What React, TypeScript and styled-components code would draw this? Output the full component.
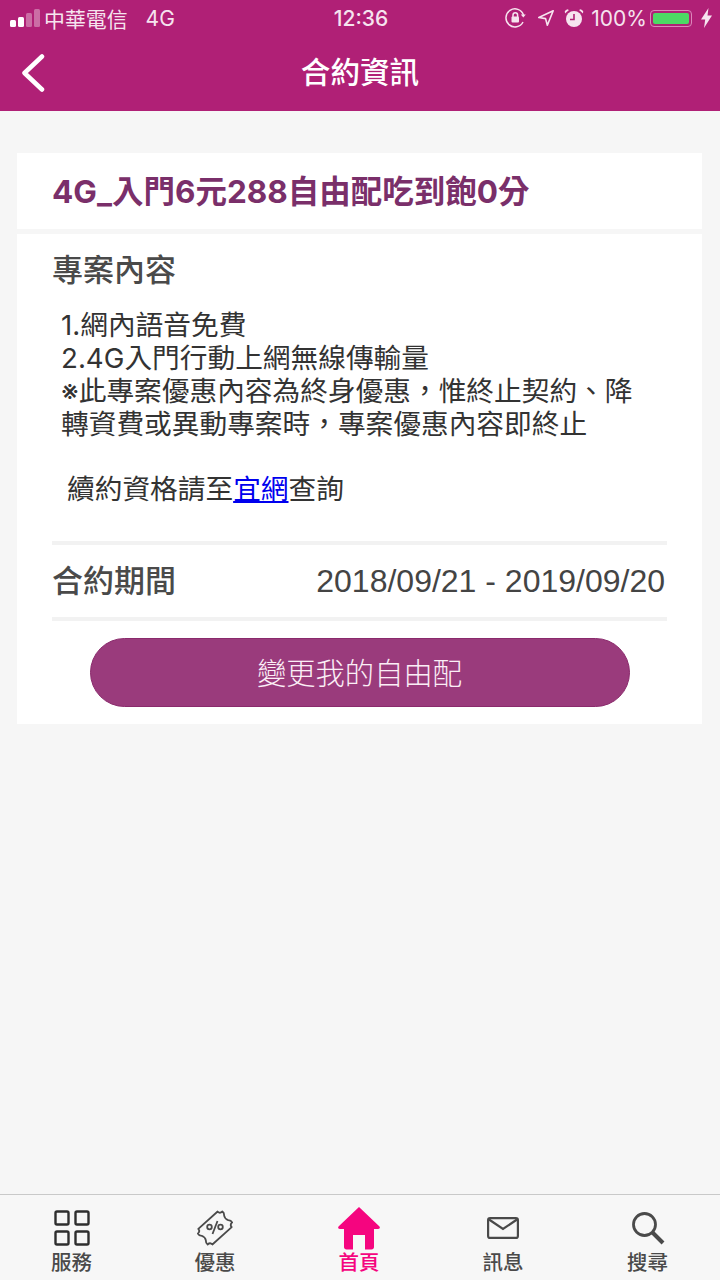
import React, { FunctionComponent } from 'react';
import styled, { createGlobalStyle } from 'styled-components';

const sans = '"Inter", "Noto Sans CJK TC", "Liberation Sans", sans-serif';

const GlobalStyle = createGlobalStyle`
  html, body {
    margin: 0;
    padding: 0;
    background: #f6f6f6;
  }
`;

const Page = styled.div`
  width: 720px;
  height: 1280px;
  display: flex;
  flex-direction: column;
  background: #f6f6f6;
  font-family: ${sans};
  overflow: hidden;
`;

const Header = styled.header`
  height: 111px;
  flex: none;
  background: #b02076;
  color: #fff;
  display: flex;
  flex-direction: column;
`;

const StatusBar = styled.div`
  height: 36px;
  padding: 0 8px 0 10px;
  display: grid;
  grid-template-columns: 1fr auto 1fr;
  align-items: center;
  font-size: 21px;
  color: #f6e4ef;
`;

const StatusLeft = styled.div`
  display: flex;
  align-items: center;
  gap: 4px;
`;

const StatusRight = styled.div`
  display: flex;
  align-items: center;
  justify-content: flex-end;
`;

const StatusGap = styled.span<{ $w: number }>`
  width: ${({ $w }) => $w}px;
`;

const Carrier = styled.span`
  font-size: 20.9px;
  margin-right: 14px;
`;

const Clock = styled.span`
  font-size: 21px;
  font-weight: 500;
`;

const Signal = styled.div`
  display: flex;
  align-items: flex-end;
  gap: 2px;
  height: 18px;
`;

const SignalBar = styled.i<{ $h: number; $on: boolean }>`
  display: block;
  width: 6px;
  height: ${({ $h }) => $h}px;
  border-radius: 1.5px;
  background: ${({ $on }) => ($on ? '#fff' : 'rgba(255,255,255,0.35)')};
`;

const Battery = styled.div`
  width: 42px;
  height: 17px;
  margin: 0 2px 0 3px;
  padding: 2px;
  box-sizing: border-box;
  border: 1px solid #dd86bb;
  border-radius: 4px;
  display: flex;
`;

const BatteryFill = styled.div`
  flex: 1;
  background: #4cd964;
  border-radius: 2px;
`;

const NavRow = styled.div`
  flex: 1;
  position: relative;
  display: flex;
  align-items: center;
  justify-content: center;
  padding-bottom: 6px;
`;

const NavTitle = styled.h1`
  margin: 0;
  font-size: 29.6px;
  font-weight: 500;
  color: #fff;
`;

const BackButton = styled.div`
  position: absolute;
  left: 21px;
  top: 18px;
  width: 24px;
  height: 38px;
`;

const Content = styled.main`
  flex: 1;
  padding: 42px 18px 0 17px;
  display: flex;
  flex-direction: column;
  gap: 5px;
`;

const TitleCard = styled.section`
  height: 76px;
  background: #fff;
  padding: 0 35px 4px;
  box-sizing: border-box;
  display: flex;
  align-items: center;
`;

const PlanTitle = styled.h2`
  margin: 0;
  font-size: 31.5px;
  font-weight: 700;
  color: #7a2f6a;
  white-space: nowrap;
`;

const DetailCard = styled.section`
  height: 490px;
  box-sizing: border-box;
  background: #fff;
  padding: 17px 35px 0 35px;
  display: flex;
  flex-direction: column;
`;

const SectionTitle = styled.h3`
  margin: 0;
  font-size: 31px;
  line-height: 38px;
  font-weight: 500;
  color: #4a4a4a;
`;

const Body = styled.div`
  margin-top: 20px;
  height: 232px;
  padding-left: 9px;
  font-size: 27.7px;
  line-height: 33px;
  color: #333;
`;

const BodyLine = styled.div`
  white-space: nowrap;
`;

const RenewLine = styled.div`
  margin-top: 32px;
  padding-left: 6px;
  white-space: nowrap;
`;

const Link = styled.a`
  color: #0000ee;
  text-decoration: underline;
`;

const Rule = styled.div`
  height: 4px;
  flex: none;
  background: #f2f2f2;
`;

const PeriodRow = styled.div`
  height: 72px;
  box-sizing: border-box;
  display: flex;
  align-items: center;
  justify-content: space-between;
  padding: 0 2px 5px 0;
`;

const PeriodLabel = styled.span`
  font-size: 31px;
  font-weight: 500;
  color: #4a4a4a;
`;

const PeriodValue = styled.span`
  margin-top: 5px;
  font-size: 32px;
  color: #444;
  font-family: "Liberation Sans", sans-serif;
`;

const ChangeButton = styled.button`
  align-self: center;
  margin-top: 17px;
  width: 540px;
  height: 69px;
  padding: 0 0 4px;
  border: 1px solid #8a2a6c;
  border-radius: 35px;
  background: #9a3b7c;
  color: #fbeef6;
  font-family: ${sans};
  font-size: 29.3px;
  font-weight: 300;
`;

const TabBar = styled.nav`
  height: 86px;
  flex: none;
  box-sizing: border-box;
  border-top: 1px solid #c9c9c9;
  background: #f7f7f7;
  display: grid;
  grid-template-columns: 143px repeat(3, 144px) 145px;
`;

const Tab = styled.div<{ $active?: boolean }>`
  position: relative;
  display: flex;
  flex-direction: column;
  align-items: center;
  color: ${({ $active }) => ($active ? '#f5057f' : '#4a4a4a')};
  font-size: 20.5px;
  font-weight: 500;
`;

const TabIcon = styled.div`
  height: 56px;
  width: 100%;
  display: flex;
  align-items: center;
  justify-content: center;
  padding-top: 10px;
  box-sizing: border-box;
`;

const TabLabel = styled.span`
  line-height: 24px;
`;

const RotationLock: FunctionComponent = () => (
  <svg width="22" height="20" viewBox="0 0 22 20" fill="none" stroke="#f6e4ef" strokeWidth="1.5">
    <path d="M18.5 7A9 9 0 1 0 18 14" />
    <path d="M15.8 6.5h5l-2.5 3z" fill="#f6e4ef" stroke="none" />
    <rect x="6.5" y="8.5" width="7.5" height="6" rx="1" fill="#f6e4ef" stroke="none" />
    <path d="M8 9V7a2.3 2.3 0 0 1 4.6 0v2" />
  </svg>
);

const LocationArrow: FunctionComponent = () => (
  <svg width="18" height="18" viewBox="0 0 20 20" fill="none" stroke="#f6e4ef" strokeWidth="1.8" strokeLinejoin="round">
    <path d="M18 2 2 9.5l7.5 1.2L11.5 18z" />
  </svg>
);

const Alarm: FunctionComponent = () => (
  <svg width="20" height="20" viewBox="0 0 20 20" fill="#f6e4ef">
    <circle cx="10" cy="11" r="8" />
    <path d="M1 5.5 5 2 3.2 1.2.8 3zM19 5.5 15 2l1.8-.8L19.2 3z" />
    <path d="M10 6v5.5H6" fill="none" stroke="#b02076" strokeWidth="1.6" />
  </svg>
);

const Bolt: FunctionComponent = () => (
  <svg width="11" height="20" viewBox="0 0 11 20" fill="#f6e4ef">
    <path d="M7.5 0 0 11.5h4.2L3 20l8-12.5H6.5z" />
  </svg>
);

const BackChevron: FunctionComponent = () => (
  <svg width="24" height="38" viewBox="0 0 24 38" fill="none" stroke="#fff" strokeWidth="4.5" strokeLinecap="round" strokeLinejoin="round">
    <path d="M21 2.5 3.5 19 21 35.5" />
  </svg>
);

const GridIcon: FunctionComponent = () => (
  <svg width="36" height="36" viewBox="0 0 36 36" fill="none" stroke="#2f2f2f" strokeWidth="2.4">
    <rect x="1.5" y="1.5" width="13" height="13" rx="1.5" />
    <rect x="21.5" y="1.5" width="13" height="13" rx="1.5" />
    <rect x="1.5" y="21.5" width="13" height="13" rx="1.5" />
    <rect x="21.5" y="21.5" width="13" height="13" rx="1.5" />
  </svg>
);

const TicketIcon: FunctionComponent = () => (
  <svg width="36" height="36" viewBox="0 0 36 36" fill="none" stroke="#4a4a4a" strokeWidth="1.8" strokeLinejoin="round">
    <g transform="translate(18 18) rotate(-42)">
      <path d="M-13 -10.500H13c0 2 1.500 3.200 3.500 3.200 .5 2 -.5 3.300 -1.500 4.300 -1 1.500 -1 4.500 0 6 1 1 2 2.300 1.500 4.300 -2 0 -3.500 1.200 -3.500 3.200H-13c0 -2 -1.500 -3.200 -3.500 -3.200 -.5 -2 .5 -3.300 1.500 -4.300 1 -1.500 1 -4.500 0 -6 -1 -1 -2 -2.300 -1.500 -4.300 2 0 3.500 -1.200 3.500 -3.200z" />
    </g>
    <circle cx="12.500" cy="17" r="2.300" />
    <circle cx="23.500" cy="17" r="2.300" />
    <path d="M20.500 11 15.500 24" />
  </svg>
);

const HomeIcon: FunctionComponent = () => (
  <svg width="44" height="44" viewBox="0 0 44 44" fill="#f5057f">
    <path d="M22 1 1.500 20.500c-1 1.500 0 2.500 1.500 2.500H7v18c0 1.500 1 2.500 2.500 2.500H16V29h12v14.500h6.500c1.500 0 2.500-1 2.500-2.500V23h4c1.500 0 2.500-1 1.500-2.500z" />
  </svg>
);

const MailIcon: FunctionComponent = () => (
  <svg width="32" height="22" viewBox="0 0 32 22" fill="none" stroke="#4a4a4a" strokeWidth="2.200">
    <rect x="1.100" y="1.100" width="29.800" height="19.800" rx="2" />
    <path d="M2 2.500 16 12 30 2.500" />
  </svg>
);

const SearchIcon: FunctionComponent = () => (
  <svg width="34" height="34" viewBox="0 0 34 34" fill="none" stroke="#4a4a4a">
    <circle cx="13.500" cy="13.500" r="11" strokeWidth="2.800" />
    <path d="M21.500 21.500 32 32" strokeWidth="4" />
  </svg>
);

const App: FunctionComponent = () => (
  <Page>
    <GlobalStyle />
    <Header>
      <StatusBar>
        <StatusLeft>
          <Signal>
            <SignalBar $h={7} $on={true} />
            <SignalBar $h={10} $on={true} />
            <SignalBar $h={14} $on={false} />
            <SignalBar $h={18} $on={false} />
          </Signal>
          <Carrier>中華電信</Carrier>
          <span>4G</span>
        </StatusLeft>
        <Clock>12:36</Clock>
        <StatusRight>
          <RotationLock />
          <StatusGap $w={10} />
          <LocationArrow />
          <StatusGap $w={9} />
          <Alarm />
          <StatusGap $w={7} />
          <span>100%</span>
          <Battery><BatteryFill /></Battery>
          <StatusGap $w={7} />
          <Bolt />
        </StatusRight>
      </StatusBar>
      <NavRow>
        <BackButton><BackChevron /></BackButton>
        <NavTitle>合約資訊</NavTitle>
      </NavRow>
    </Header>
    <Content>
      <TitleCard>
        <PlanTitle>4G_入門6元288自由配吃到飽0分</PlanTitle>
      </TitleCard>
      <DetailCard>
        <SectionTitle>專案內容</SectionTitle>
        <Body>
          <BodyLine>1.網內語音免費</BodyLine>
          <BodyLine>2.4G入門行動上網無線傳輸量</BodyLine>
          <BodyLine>※此專案優惠內容為終身優惠，惟終止契約、降</BodyLine>
          <BodyLine>轉資費或異動專案時，專案優惠內容即終止</BodyLine>
          <RenewLine>續約資格請至<Link href="#">宜網</Link>查詢</RenewLine>
        </Body>
        <Rule />
        <PeriodRow>
          <PeriodLabel>合約期間</PeriodLabel>
          <PeriodValue>2018/09/21 - 2019/09/20</PeriodValue>
        </PeriodRow>
        <Rule />
        <ChangeButton type="button">變更我的自由配</ChangeButton>
      </DetailCard>
    </Content>
    <TabBar>
      <Tab><TabIcon><GridIcon /></TabIcon><TabLabel>服務</TabLabel></Tab>
      <Tab><TabIcon><TicketIcon /></TabIcon><TabLabel>優惠</TabLabel></Tab>
      <Tab $active={true}><TabIcon><HomeIcon /></TabIcon><TabLabel>首頁</TabLabel></Tab>
      <Tab><TabIcon><MailIcon /></TabIcon><TabLabel>訊息</TabLabel></Tab>
      <Tab><TabIcon><SearchIcon /></TabIcon><TabLabel>搜尋</TabLabel></Tab>
    </TabBar>
  </Page>
);

export default App;
